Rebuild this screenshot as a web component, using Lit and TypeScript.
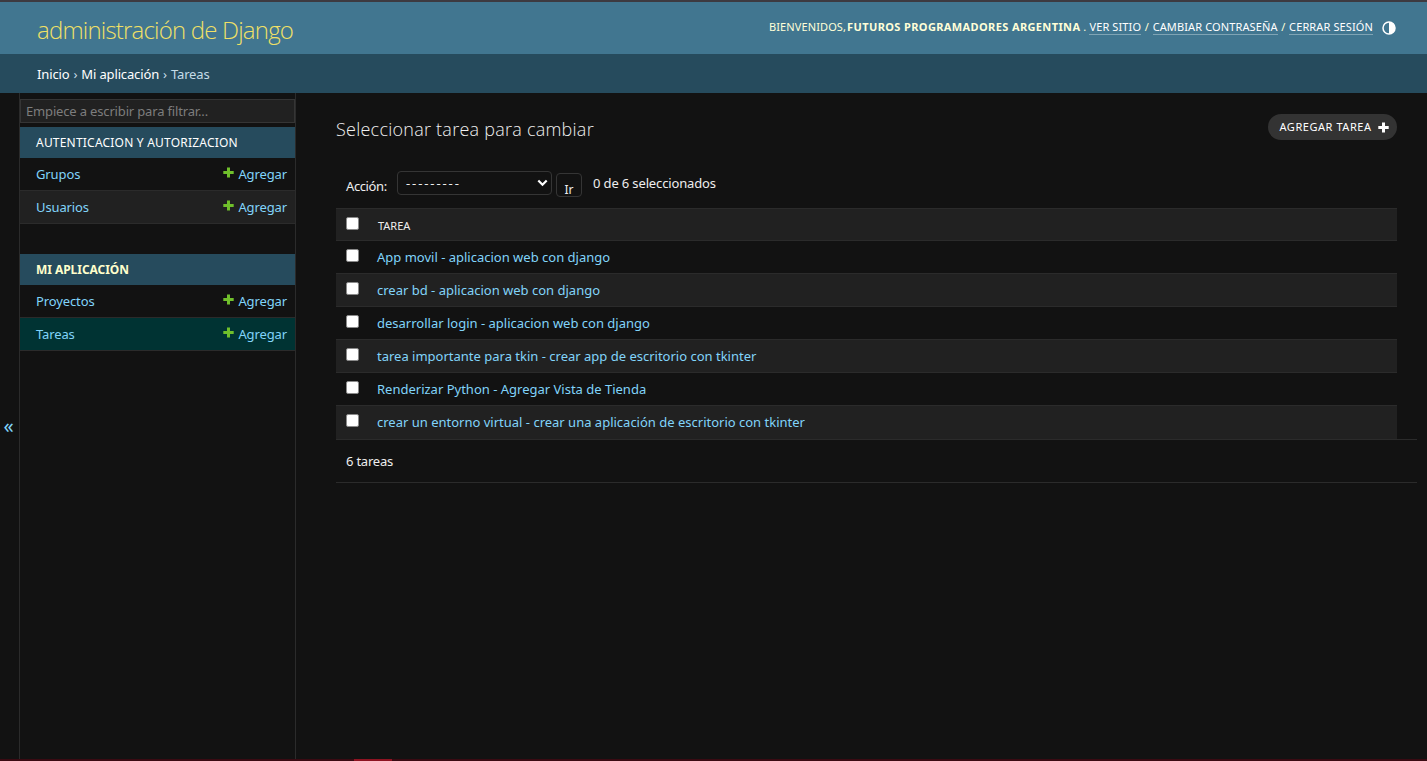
import { LitElement, html, css, svg } from "lit";
import { customElement } from "lit/decorators.js";

const plus = (cls: string) => html`<svg class=${cls} viewBox="0 0 11 11">
  ${svg`<path d="M4 0.5h3v3.5h3.7v3h-3.7v3.5h-3v-3.5H0.3v-3H4z"></path>`}
</svg>`;

const tasks = [
  "App movil - aplicacion web con django",
  "crear bd - aplicacion web con django",
  "desarrollar login - aplicacion web con django",
  "tarea importante para tkin - crear app de escritorio con tkinter",
  "Renderizar Python - Agregar Vista de Tienda",
  "crear un entorno virtual - crear una aplicación de escritorio con tkinter",
];

const modules = [
  { name: "AUTENTICACION Y AUTORIZACION", current: false, models: ["Grupos", "Usuarios"] },
  { name: "MI APLICACIÓN", current: true, models: ["Proyectos", "Tareas"] },
];

@customElement("app-root")
export class AppRoot extends LitElement {
  static styles = css`
    :host {
      display: flex;
      flex-direction: column;
      box-sizing: border-box;
      height: 761px;
      width: 100%;
      overflow: hidden;
      background: #121212;
      color: #eee;
      border-top: 2px solid #3d3a40;
      font: 13px/18px "Noto Sans", "Open Sans", sans-serif;
      white-space: nowrap;
    }
    * { box-sizing: border-box; }
    a { color: #81d4fa; text-decoration: none; }
    header {
      height: 52px;
      flex: none;
      background: #417690;
      display: flex;
      justify-content: space-between;
      align-items: flex-start;
      padding: 0 31px 0 37px;
    }
    .brand {
      font: 300 24px/30px "Open Sans", sans-serif;
      color: #f0e066;
      padding-top: 13px;
      letter-spacing: -0.8px;
    }
    .tools {
      display: flex;
      align-items: center;
      padding-top: 15px;
      font-size: 11px;
      line-height: 16px;
      letter-spacing: 0.12px;
      color: #ffffd8;
      height: 34px;
    }
    .tools span, .tools strong, .tools a { white-space: pre; height: 16px; }
    .tools strong { color: #ffffd8; letter-spacing: 0.38px; margin-left: 1px; }
    .tools a { color: #fff; border-bottom: 1px solid #7fa4b5; height: 17px; padding-top: 1px; margin-top: 0; line-height: 15px; }
    .tools .sep { width: 11.5px; text-align: center; }
    .theme { width: 14px; height: 14px; margin-left: 9px; margin-top: 3px; }
    .crumbs {
      height: 39px;
      flex: none;
      background: #264b5d;
      padding: 11px 37px;
      color: #c4dce8;
      display: flex;
      gap: 4px;
      letter-spacing: -0.14px;
    }
    .crumbs a { color: #fff; }
    .body { flex: 1; display: flex; min-height: 0; }
    .toggle {
      width: 20px;
      border-right: 1px solid #2b2b2b;
      display: flex;
      align-items: center;
      padding: 0 0 0 3.5px;
      color: #81d4fa;
      font-size: 20px;
    }
    nav { width: 276px; border-right: 1px solid #2b2b2b; padding-top: 6px; }
    .filter {
      height: 24px;
      border: 1px solid #353535;
      background: #212121;
      color: #7d7d7d;
      padding: 2px 5px;
      margin-bottom: 4px;
      letter-spacing: -0.16px;
    }
    .module { margin-bottom: 30px; }
    .caption { height: 31px; background: #264b5d; padding: 7px 16px; color: #fff; font-size: 12px; letter-spacing: 0.21px; }
    .current .caption { color: #ffc; font-weight: 700; letter-spacing: -0.05px; }
    .model {
      height: 33px;
      border-bottom: 1px solid #2b2b2b;
      display: flex;
      align-items: center;
      padding: 0 8px 0 16px;
      letter-spacing: -0.12px;
    }
    .model:nth-child(odd) { background: #212121; }
    .current .model:last-child { background: #003333; }
    .model a:first-child { flex: 1; }
    .add { display: flex; align-items: center; gap: 4px; }
    .green { width: 11px; height: 11px; fill: #70bf2b; margin-top: -4px; }
    main { flex: 1; padding: 21px 10px 0 40px; }
    .top { display: flex; justify-content: space-between; align-items: flex-start; padding-right: 20px; height: 50px; }
    h1 { margin: 2px 0 0; font: 300 18px/27px "Open Sans", sans-serif; color: #f0f0f0; letter-spacing: 0.24px; }
    .addtask {
      display: flex;
      align-items: center;
      width: 129px;
      height: 26px;
      border-radius: 13px;
      background: #333;
      color: #fff;
      font-size: 11px;
      letter-spacing: 0.55px;
      padding: 0 8px 0 11.5px;
      justify-content: space-between;
    }
    .white { width: 11px; height: 11px; fill: #fff; }
    .actions { height: 44px; display: flex; align-items: flex-start; padding: 7px 10px 0; }
    .label { width: 51px; padding-top: 6px; letter-spacing: -0.4px; }
    .select {
      width: 155px;
      height: 24px;
      border: 1px solid #353535;
      border-radius: 4px;
      display: flex;
      align-items: center;
      justify-content: space-between;
      padding: 0 3px 0 8px;
      letter-spacing: 1.9px;
    }
    .chev { width: 11px; height: 8px; fill: none; stroke: #fff; stroke-width: 2.2; }
    .go {
      width: 26px;
      height: 24px;
      margin: 2px 11px 0 4px;
      border: 1px solid #353535;
      border-radius: 4px;
      text-align: center;
      padding-top: 7px;
      line-height: 18px;
      font-size: 12px;
      overflow: hidden;
    }
    .count { padding-top: 3px; letter-spacing: -0.14px; }
    .table { width: 1061px; border-top: 1px solid #2b2b2b; }
    .row {
      height: 33px;
      display: flex;
      align-items: flex-start;
      border-bottom: 1px solid #2b2b2b;
      padding: 8px 10px 0;
      gap: 18px;
    }
    .row:nth-child(odd) { background: #212121; }
    .row:first-child { height: 32px; font-size: 11px; gap: 19px; }
    .row:last-child { height: 34px; }
    .box { width: 13px; height: 13px; flex: none; background: #fff; border: 1px solid #8a8a8a; border-radius: 2px; }
    .cell { line-height: 17px; }
    .pages { height: 44px; border-top: 1px solid #2b2b2b; border-bottom: 1px solid #2b2b2b; padding: 12px 10px; margin-top: -1px; letter-spacing: -0.22px; }
    footer { height: 2px; flex: none; background: #3a0a12; padding-left: 354px; }
    .tab { width: 38px; height: 2px; background: #8e1321; }
  `;

  render() {
    return html`
      <header>
        <div class="brand">administración de Django</div>
        <div class="tools">
          <span>BIENVENIDOS,</span><strong>FUTUROS PROGRAMADORES ARGENTINA</strong><span> . </span><a>VER SITIO</a><span class="sep">/</span><a>CAMBIAR CONTRASEÑA</a><span class="sep">/</span><a>CERRAR SESIÓN</a>
          <svg class="theme" viewBox="0 0 14 14">
            <circle cx="7" cy="7" r="6" fill="none" stroke="#fff" stroke-width="1.5"></circle>
            <path d="M7 1a6 6 0 0 1 0 12z" fill="#fff"></path>
          </svg>
        </div>
      </header>
      <div class="crumbs"><a>Inicio</a><span>›</span><a>Mi aplicación</a><span>›</span><span>Tareas</span></div>
      <div class="body">
        <div class="toggle">«</div>
        <nav>
          <div class="filter">Empiece a escribir para filtrar...</div>
          ${modules.map(
            (m) => html`<div class="module ${m.current ? "current" : ""}">
              <div class="caption">${m.name}</div>
              ${m.models.map((x) => html`<div class="model"><a>${x}</a><a class="add">${plus("green")}<span>Agregar</span></a></div>`)}
            </div>`
          )}
        </nav>
        <main>
          <div class="top">
            <h1>Seleccionar tarea para cambiar</h1>
            <a class="addtask"><span>AGREGAR TAREA</span>${plus("white")}</a>
          </div>
          <div class="actions">
            <span class="label">Acción:</span>
            <div class="select"><span>---------</span><svg class="chev" viewBox="0 0 11 8"><path d="M1.3 1.5L5.5 5.7L9.7 1.5"></path></svg></div>
            <div class="go">Ir</div>
            <span class="count">0 de 6 seleccionados</span>
          </div>
          <div class="table">
            <div class="row"><i class="box"></i><span class="cell">TAREA</span></div>
            ${tasks.map((t) => html`<div class="row"><i class="box"></i><a class="cell">${t}</a></div>`)}
          </div>
          <div class="pages">6 tareas</div>
        </main>
      </div>
      <footer><div class="tab"></div></footer>
    `;
  }
}
